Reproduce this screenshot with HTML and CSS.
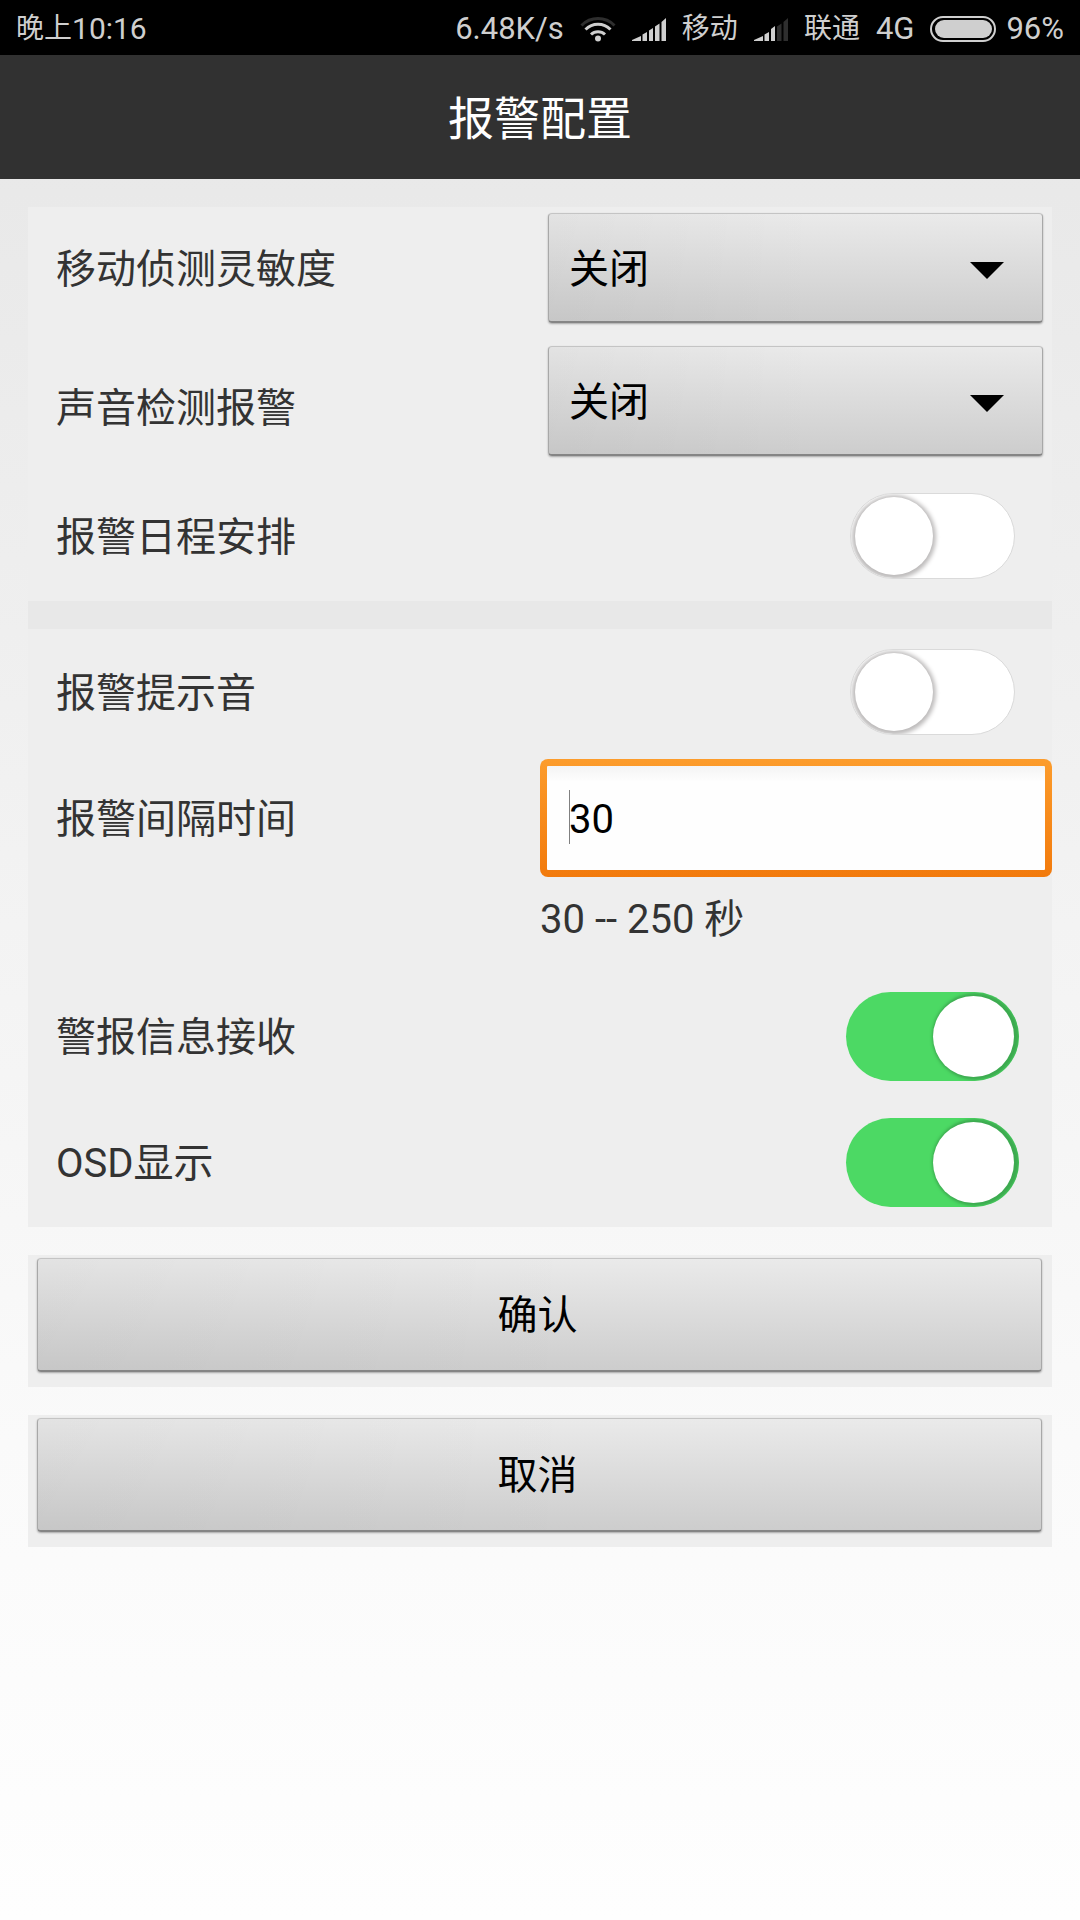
FILE: index.html
```html
<!DOCTYPE html>
<html lang="zh-CN">
<head>
  <meta charset="UTF-8" />
  <meta name="viewport" content="width=device-width, initial-scale=1.0"/>
  <title>报警配置</title>
  <link rel="stylesheet" href="styles.css">
</head>
<body>

  <div class="status-bar">
    <div class="status-time"><span class="status-cn">晚上</span><span>10:16</span></div>
    <div class="status-icons">
      <span>6.48K/s</span>
      <svg class="icon-wifi" width="36" height="26" viewBox="0 0 36 26" fill="none" stroke="#cfcfcf" stroke-width="3">
        <path d="M1.5 9.500a23 23 0 0 1 33 0" stroke="#2e2e2e"/>
        <path d="M5.500 13.500a17.500 17.500 0 0 1 25 0"/>
        <path d="M11 18.500a10 10 0 0 1 14 0"/>
        <circle cx="18" cy="22.500" r="3" fill="#cfcfcf" stroke="none"/>
      </svg>
      <svg width="34" height="24" viewBox="0 0 34 24" fill="#cfcfcf">
        <path d="M0 24v-1l9-4v5zM10.500 24v-6.500l4.500-2.500v9zM17 24V13.500l4-2.500v13zM23 24V9.500l4.500-3V24zM29.500 24V5L34 1v23z"/>
      </svg>
      <span class="status-cn">移动</span>
      <svg width="34" height="24" viewBox="0 0 34 24" fill="#cfcfcf">
        <path d="M0 24v-1l9-4v5zM10.500 24v-6.500l4.500-2.500v9zM17 24V12l4-3v15z"/>
        <path d="M23 24V9.500l4.500-3V24zM29.500 24V5L34 1v23z" fill="#2e2e2e"/>
      </svg>
      <span class="status-cn">联通</span>
      <span>4G</span>
      <span class="battery">
        <svg width="66" height="26" viewBox="0 0 66 26">
          <rect x="1" y="1" width="64" height="24" rx="12" fill="none" stroke="#cfcfcf" stroke-width="2"/>
          <rect x="5" y="4" width="57" height="18" rx="9" fill="#cfcfcf"/>
        </svg>
        <span>96%</span>
      </span>
    </div>
  </div>

  <header class="header">
    <h1>报警配置</h1>
  </header>

  <form class="settings">
    <div class="panel">
      <div class="row row-first">
        <label for="motion">移动侦测灵敏度</label>
        <div class="select-box">
          <select id="motion"><option>关闭</option></select>
        </div>
      </div>
      <div class="row row-second">
        <label for="sound">声音检测报警</label>
        <div class="select-box">
          <select id="sound"><option>关闭</option></select>
        </div>
      </div>
      <div class="row row-last">
        <label for="schedule">报警日程安排</label>
        <input type="checkbox" class="switch" id="schedule">
      </div>
    </div>

    <div class="divider"></div>

    <div class="panel">
      <div class="row row-tone">
        <label for="tone">报警提示音</label>
        <input type="checkbox" class="switch" id="tone">
      </div>
      <div class="row">
        <label for="interval">报警间隔时间</label>
        <input type="text" class="text-input" id="interval" value="30" inputmode="numeric">
      </div>
      <div class="row row-hint">
        <span class="hint">30 -- 250 秒</span>
      </div>
      <div class="row row-receive">
        <label for="receive">警报信息接收</label>
        <input type="checkbox" class="switch" id="receive" checked>
      </div>
      <div class="row row-last">
        <label for="osd">OSD显示</label>
        <input type="checkbox" class="switch" id="osd" checked>
      </div>
    </div>

    <div class="button-panel">
      <button type="button">确认</button>
    </div>
    <div class="button-panel">
      <button type="button">取消</button>
    </div>
  </form>

</body>
</html>
```

FILE: styles.css
```css
:root {
  --panel-bg: #eeeeee;
  --text-color: #333333;
  --status-color: #cfcfcf;
  --green: #4cd964;
}

* {
  box-sizing: border-box;
}

body {
  margin: 0;
  min-height: 100vh;
  background: linear-gradient(#e6e6e6, #e9e9e9 10%, #fafafa 75%, #fefefe) no-repeat;
  color: var(--text-color);
  font-family: Roboto, "Noto Sans CJK SC", sans-serif;
  font-size: 40px;
  line-height: 48px;
}

/* status bar */
.status-bar {
  display: flex;
  justify-content: space-between;
  align-items: center;
  height: 55px;
  padding: 2px 16px 0;
  background: #000;
  color: var(--status-color);
  font-size: 31px;
  line-height: 40px;
}

.status-time {
  display: flex;
  align-items: center;
  font-size: 30px;
}

.status-icons {
  display: flex;
  align-items: center;
  gap: 16px;
}

.status-cn {
  font-size: 28px;
}

.battery {
  display: flex;
  align-items: center;
  gap: 10px;
}

.header {
  display: flex;
  align-items: center;
  justify-content: center;
  height: 124px;
  padding-top: 4px;
  background: #313131;
  color: #fff;
}

.header h1 {
  margin: 0;
  font-size: 46px;
  font-weight: 400;
  line-height: 56px;
}

/* settings */
.settings {
  padding: 28px;
}

.panel {
  background: var(--panel-bg);
}

.divider {
  height: 28px;
  background: #e8e8e8;
}

.row {
  display: grid;
  grid-template-columns: 1fr 1fr;
  align-items: center;
}

.row label {
  padding: 4px 0 0 28px;
}

.row-first {
  height: 122px;
}

.row-second {
  height: 156px;
}

.row-second .select-box {
  align-self: start;
  margin-top: 17px;
}

.row-last {
  height: 116px;
  padding-bottom: 14px;
}

.row-tone {
  height: 130px;
  padding-bottom: 4px;
}

.row-hint {
  height: 84px;
  padding-top: 2px;
}

.row-receive {
  height: 150px;
}

.hint {
  grid-column: 2;
}

.select-box {
  position: relative;
  margin: 0 9px 0 8px;
}

.select-box::after {
  content: "";
  position: absolute;
  top: 49px;
  right: 39px;
  border: 17px solid transparent;
  border-top-color: #000;
  border-bottom: 0;
  pointer-events: none;
}

select,
button {
  display: block;
  width: 100%;
  border: 1px solid #a8a8a8;
  border-top-color: #c4c4c4;
  border-bottom: 2px solid #858585;
  border-radius: 4px;
  background:
    linear-gradient(to right, rgba(0, 0, 0, 0.03), transparent 55%),
    linear-gradient(#eaeaea, #cdcdcd);
  box-shadow: 0 1px 2px rgba(0, 0, 0, 0.3);
  color: #000;
  font: inherit;
}

select {
  appearance: none;
  height: 110px;
  padding: 4px 80px 0 20px;
}

button {
  height: 114px;
  padding: 2px 4px 0 0;
}

.text-input {
  width: 100%;
  height: 118px;
  padding: 2px 22px 0;
  border: 7px solid transparent;
  border-radius: 8px;
  /* caret, inner shade, white field, orange frame */
  background:
    linear-gradient(#808080, #808080) 22px 24px / 1px 54px no-repeat padding-box,
    linear-gradient(#f4f4f4, #fefefe 16px) padding-box,
    linear-gradient(#fc9c2c, #f27a0c) border-box;
  color: #000;
  font: inherit;
  outline: none;
}

/* switches */
.switch {
  appearance: none;
  display: flex;
  align-items: center;
  justify-self: end;
  width: 165px;
  height: 86px;
  margin: 0 37px 0 0;
  padding: 0 4px;
  border: 1px solid #dadada;
  border-radius: 43px;
  background: #fff;
  overflow: hidden;
}

.switch::before {
  content: "";
  width: 78px;
  height: 78px;
  border-radius: 50%;
  background: #fff;
  box-shadow: 0 1px 4px 3px #bdbbbb;
}

.switch:checked {
  justify-content: flex-end;
  width: 173px;
  height: 89px;
  margin-right: 33px;
  padding: 0 5px;
  border: 0;
  border-radius: 45px;
  background: var(--green);
}

.switch:checked::before {
  width: 81px;
  height: 81px;
  box-shadow: 2px 0 3px 3px #3daa50;
}

.button-panel {
  margin-top: 28px;
  padding: 3px 10px 15px 9px;
  background: var(--panel-bg);
}
```
